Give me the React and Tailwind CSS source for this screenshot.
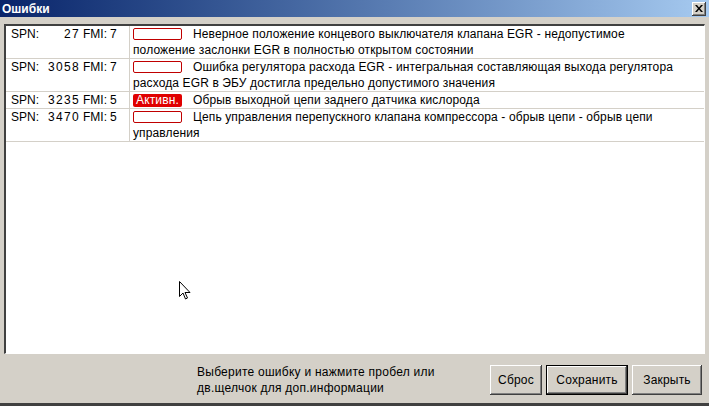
const errors = [
  {
    spn: "27",
    fmi: "7",
    active: false,
    text: "Неверное положение концевого выключателя клапана EGR - недопустимое",
    more: "положение заслонки EGR в полностью открытом состоянии",
  },
  {
    spn: "3058",
    fmi: "7",
    active: false,
    text: "Ошибка регулятора расхода EGR - интегральная составляющая выхода регулятора",
    more: "расхода EGR в ЭБУ достигла предельно допустимого значения",
  },
  {
    spn: "3235",
    fmi: "5",
    active: true,
    text: "Обрыв выходной цепи заднего датчика кислорода",
  },
  {
    spn: "3470",
    fmi: "5",
    active: false,
    text: "Цепь управления перепускного клапана компрессора - обрыв цепи - обрыв цепи",
    more: "управления",
  },
];

const raised =
  "bg-[#d4d0c8] shadow-[inset_-1px_-1px_#404040,inset_1px_1px_#ffffff,inset_-2px_-2px_#808080]";

const Button = ({ label, wide, isDefault }) => (
  <button
    className={
      isDefault
        ? `${raised} h-[30px] ${wide} border border-black text-black tracking-[0.2px]`
        : `${raised} h-[30px] ${wide} text-black tracking-[0.2px]`
    }
  >
    {label}
  </button>
);

const ErrorRow = ({ item }) => (
  <div className="flex border-b border-[#d4d0c8]">
    <div className="w-[124px] shrink-0 border-r border-[#d4d0c8] pl-[5px] leading-[16px] flex">
      <span>SPN:</span>
      <span className="w-[41px] text-right tracking-[1.3px]">{item.spn}</span>
      <span className="ml-[3px]">FMI:</span>
      <span className="ml-[3px]">{item.fmi}</span>
    </div>
    <div className="flex-1 pl-[3px] leading-[16px] tracking-[0.12px]">
      <div className="flex items-center">
        {item.active ? (
          <span className="h-[13px] w-[49px] rounded-[2px] bg-[#e00000] text-white leading-[13px] text-center">
            Активн.
          </span>
        ) : (
          <span className="h-[12px] w-[49px] rounded-[2px] border border-[#c00000] bg-white" />
        )}
        <span className="ml-[11px]">{item.text}</span>
      </div>
      {item.more && <div>{item.more}</div>}
    </div>
  </div>
);

export default function App() {
  return (
    <div
      className="relative w-[709px] h-[406px] bg-[#d4d0c8] flex flex-col overflow-hidden text-[12px] text-black"
      style={{ fontFamily: '"Liberation Sans", Arial, sans-serif' }}
    >
      {/* title bar */}
      <div className="h-[17px] shrink-0 flex items-center justify-between bg-gradient-to-r from-[#0a246a] to-[#a6caf0] pl-[2px] pr-[3px]">
        <span className="text-white font-bold text-[12px]">Ошибки</span>
        <button className={`${raised} w-[14px] h-[14px] flex items-center justify-center`}>
          <svg width="8" height="7" viewBox="0 0 8 7">
            <path d="M0 0h2l2 2.5L6 0h2L5 3.5 8 7H6L4 4.5 2 7H0l3-3.5z" fill="#000" />
          </svg>
        </button>
      </div>

      <div className="flex-1 flex flex-col px-[4px] pt-[7px]">
        {/* list */}
        <div className="h-[330px] bg-white border-t-2 border-l-2 border-t-[#404040] border-l-[#404040] border-r border-b border-r-white border-b-white">
          {errors.map((item) => (
            <ErrorRow key={item.spn} item={item} />
          ))}
        </div>

        {/* bottom bar */}
        <div className="flex items-center pt-[10px]">
          <div className="ml-[193px] w-[290px] leading-[16px] tracking-[0.25px]">
            <div>Выберите ошибку и нажмите пробел или</div>
            <div>дв.щелчок для доп.информации</div>
          </div>
          <div className="flex gap-[4px] ml-[3px]">
            <Button label="Сброс" wide="w-[52px]" />
            <Button label="Сохранить" wide="w-[82px]" isDefault />
            <Button label="Закрыть" wide="w-[70px]" />
          </div>
        </div>
      </div>
      <div className="h-[3px] shrink-0 bg-[#404040]" />

      {/* mouse pointer */}
      <svg className="absolute left-[179px] top-[281px]" width="13" height="20" viewBox="0 0 13 20">
        <path
          d="M0.5 0.5v15l3.5-3.5 2.5 6 2-1-2.5-5.5h5z"
          fill="#fff"
          stroke="#000"
          strokeWidth="1"
        />
      </svg>
    </div>
  );
}
